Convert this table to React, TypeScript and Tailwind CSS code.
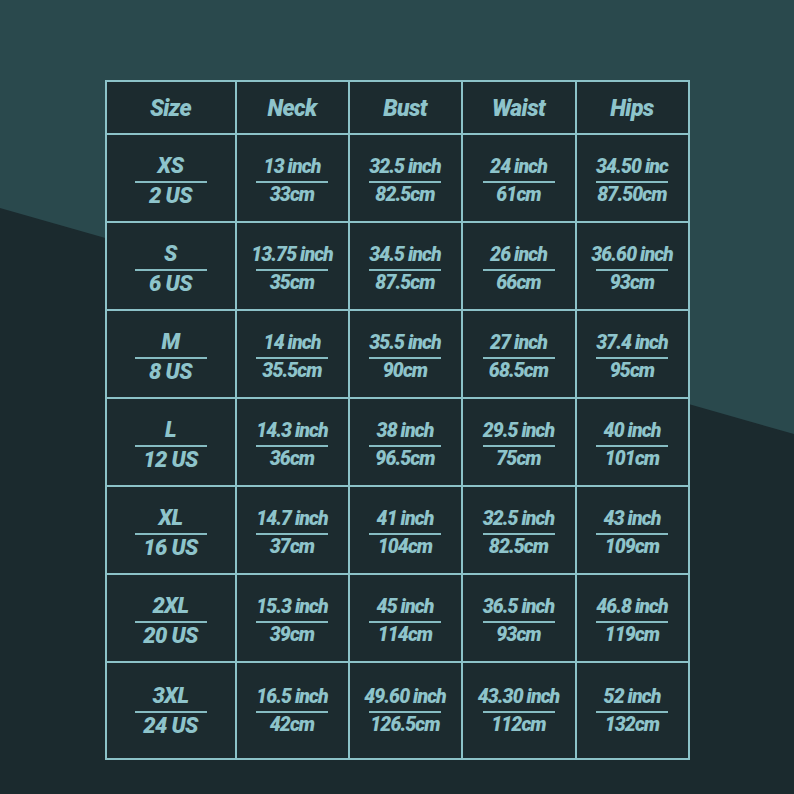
const rows: [string, string, [string, string][]][] = [
  ["XS", "2 US", [["13 inch", "33cm"], ["32.5 inch", "82.5cm"], ["24 inch", "61cm"], ["34.50 inc", "87.50cm"]]],
  ["S", "6 US", [["13.75 inch", "35cm"], ["34.5 inch", "87.5cm"], ["26 inch", "66cm"], ["36.60 inch", "93cm"]]],
  ["M", "8 US", [["14 inch", "35.5cm"], ["35.5 inch", "90cm"], ["27 inch", "68.5cm"], ["37.4 inch", "95cm"]]],
  ["L", "12 US", [["14.3 inch", "36cm"], ["38 inch", "96.5cm"], ["29.5 inch", "75cm"], ["40 inch", "101cm"]]],
  ["XL", "16 US", [["14.7 inch", "37cm"], ["41 inch", "104cm"], ["32.5 inch", "82.5cm"], ["43 inch", "109cm"]]],
  ["2XL", "20 US", [["15.3 inch", "39cm"], ["45 inch", "114cm"], ["36.5 inch", "93cm"], ["46.8 inch", "119cm"]]],
  ["3XL", "24 US", [["16.5 inch", "42cm"], ["49.60 inch", "126.5cm"], ["43.30 inch", "112cm"], ["52 inch", "132cm"]]],
];

const headers = ["Size", "Neck", "Bust", "Waist", "Hips"];

function Pair({ top, bottom, big, last }: { top: string; bottom: string; big?: boolean; last?: boolean }) {
  const txt = big
    ? "text-[22px] leading-[24px] font-black tracking-[-0.6px]"
    : "text-[19.5px] leading-[22px] font-black tracking-[-0.9px]";
  return (
    <div className={`flex flex-col items-center justify-center bg-[#1c2b2f] ${last ? "pt-0" : "pt-[5px]"}`}>
      <div className={`${txt} whitespace-nowrap`}>{top}</div>
      <div className="mt-[3px] h-[2px] w-[72px] bg-[#86bcc2]" />
      <div className={`${txt} mt-[1px] whitespace-nowrap`}>{bottom}</div>
    </div>
  );
}

export default function App() {
  return (
    <div
      className="relative h-[794px] w-[794px] overflow-hidden bg-[#1b2a2e] text-[#8ec4cb] italic"
      style={{ fontFamily: "Roboto, 'Liberation Sans', sans-serif" }}
    >
      <svg className="absolute inset-0" width="794" height="794" viewBox="0 0 794 794">
        <polygon points="0,0 794,0 794,434 0,208" fill="#2a494d" />
      </svg>
      <div className="relative flex justify-center pt-[80px]">
        <div className="grid grid-cols-[128px_111px_111px_112px_111px] grid-rows-[51px_repeat(6,86px)_95px] gap-[2px] bg-[#8cc2c8] p-[2px]">
          {headers.map((h) => (
            <div key={h} className="flex items-center justify-center bg-[#1c2b2f] pt-[4px] text-[23px] font-black tracking-[-0.6px]">
              {h}
            </div>
          ))}
          {rows.map(([size, us, cells], i) => {
            const last = i === rows.length - 1;
            return [
              <Pair key={size} top={size} bottom={us} big last={last} />,
              ...cells.map(([a, b], j) => <Pair key={size + j} top={a} bottom={b} last={last} />),
            ];
          })}
        </div>
      </div>
    </div>
  );
}
